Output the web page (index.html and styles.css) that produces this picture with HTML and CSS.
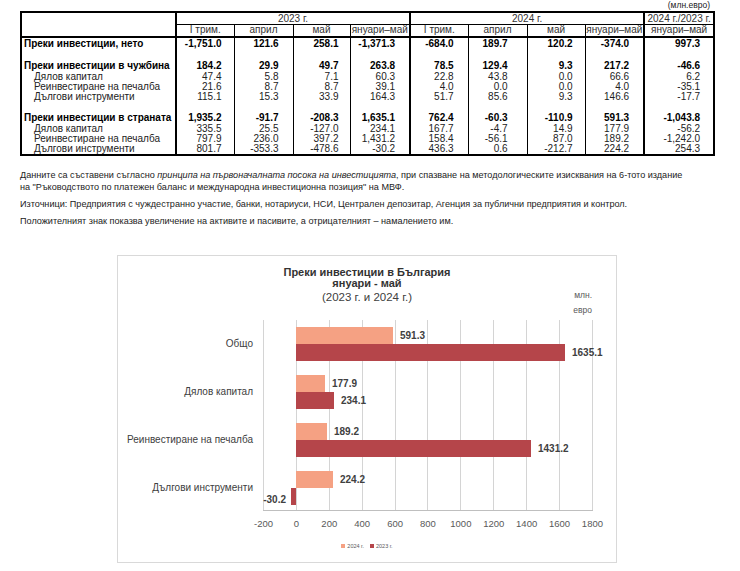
FILE: index.html
```html
<!DOCTYPE html>
<html lang="bg">
<head>
<meta charset="utf-8">
<title>Преки инвестиции</title>
<link rel="stylesheet" href="styles.css">
</head>
<body>
<div class="page">
  <div class="unit">(млн.евро)</div>
  <table class="data">
    <colgroup>
      <col class="w-label"><col class="w58"><col class="w59"><col class="w57"><col class="w60">
      <col class="w58"><col class="w59"><col class="w58"><col class="w59"><col class="w70">
    </colgroup>
    <thead>
      <tr class="h1">
        <th rowspan="2" class="lbl"></th>
        <th colspan="4" class="grp">2023 г.</th>
        <th colspan="4" class="grp">2024 г.</th>
        <th class="grp cmp">2024 г./2023 г.</th>
      </tr>
      <tr class="h2">
        <th class="grp">I трим.</th><th>април</th><th>май</th><th>януари–май</th>
        <th class="grp">I трим.</th><th>април</th><th>май</th><th>януари–май</th>
        <th class="grp">януари–май</th>
      </tr>
    </thead>
    <tbody>
      <tr class="main first">
        <td>Преки инвестиции, нето</td><td>-1,751.0</td><td>121.6</td><td>258.1</td><td>-1,371.3</td><td>-684.0</td><td>189.7</td><td>120.2</td><td>-374.0</td><td>997.3</td>
      </tr>
      <tr class="gap"><td></td><td></td><td></td><td></td><td></td><td></td><td></td><td></td><td></td><td></td></tr>
      <tr class="main">
        <td>Преки инвестиции в чужбина</td><td>184.2</td><td>29.9</td><td>49.7</td><td>263.8</td><td>78.5</td><td>129.4</td><td>9.3</td><td>217.2</td><td>-46.6</td>
      </tr>
      <tr class="sub">
        <td>Дялов капитал</td><td>47.4</td><td>5.8</td><td>7.1</td><td>60.3</td><td>22.8</td><td>43.8</td><td>0.0</td><td>66.6</td><td>6.2</td>
      </tr>
      <tr class="sub">
        <td>Реинвестиране на печалба</td><td>21.6</td><td>8.7</td><td>8.7</td><td>39.1</td><td>4.0</td><td>0.0</td><td>0.0</td><td>4.0</td><td>-35.1</td>
      </tr>
      <tr class="sub">
        <td>Дългови инструменти</td><td>115.1</td><td>15.3</td><td>33.9</td><td>164.3</td><td>51.7</td><td>85.6</td><td>9.3</td><td>146.6</td><td>-17.7</td>
      </tr>
      <tr class="gap"><td></td><td></td><td></td><td></td><td></td><td></td><td></td><td></td><td></td><td></td></tr>
      <tr class="main">
        <td>Преки инвестиции в страната</td><td>1,935.2</td><td>-91.7</td><td>-208.3</td><td>1,635.1</td><td>762.4</td><td>-60.3</td><td>-110.9</td><td>591.3</td><td>-1,043.8</td>
      </tr>
      <tr class="sub">
        <td>Дялов капитал</td><td>335.5</td><td>25.5</td><td>-127.0</td><td>234.1</td><td>167.7</td><td>-4.7</td><td>14.9</td><td>177.9</td><td>-56.2</td>
      </tr>
      <tr class="sub">
        <td>Реинвестиране на печалба</td><td>797.9</td><td>236.0</td><td>397.2</td><td>1,431.2</td><td>158.4</td><td>-56.1</td><td>87.0</td><td>189.2</td><td>-1,242.0</td>
      </tr>
      <tr class="sub last">
        <td>Дългови инструменти</td><td>801.7</td><td>-353.3</td><td>-478.6</td><td>-30.2</td><td>436.3</td><td>0.6</td><td>-212.7</td><td>224.2</td><td>254.3</td>
      </tr>
    </tbody>
  </table>

  <div class="notes">
    <p>Данните са съставени съгласно <i>принципа на първоначалната посока на инвестицията</i>, при спазване на методологическите изисквания на 6-тото издание<br>на "Ръководството по платежен баланс и международна инвестиционна позиция" на МВФ.</p>
    <p>Източници: Предприятия с чуждестранно участие, банки, нотариуси, НСИ, Централен депозитар, Агенция за публични предприятия и контрол.</p>
    <p>Положителният знак показва увеличение на активите и пасивите, а отрицателният – намалението им.</p>
  </div>

  <div class="chart">
    <div class="chart-head">
      <div class="title">
        <div class="t1">Преки инвестиции в България</div>
        <div class="t2">януари - май</div>
        <div class="t3">(2023 г. и 2024 г.)</div>
      </div>
      <div class="units">млн.<br>евро</div>
    </div>
    <div class="chart-body">
      <div class="cats">
        <div class="cat">Общо</div>
        <div class="cat">Дялов капитал</div>
        <div class="cat">Реинвестиране на печалба</div>
        <div class="cat">Дългови инструменти</div>
      </div>
      <div class="plot">
        <div class="grid"><i></i><i></i><i></i><i></i><i></i><i></i><i></i><i></i><i></i><i></i><i></i></div>
        <div class="band">
          <div class="row"><span class="neg"></span><span class="pos"><b class="bar y24" style="width:97px"></b><em>591.3</em></span></div>
          <div class="row"><span class="neg"></span><span class="pos"><b class="bar y23" style="width:269px"></b><em>1635.1</em></span></div>
        </div>
        <div class="band">
          <div class="row"><span class="neg"></span><span class="pos"><b class="bar y24" style="width:29px"></b><em>177.9</em></span></div>
          <div class="row"><span class="neg"></span><span class="pos"><b class="bar y23" style="width:38px"></b><em>234.1</em></span></div>
        </div>
        <div class="band">
          <div class="row"><span class="neg"></span><span class="pos"><b class="bar y24" style="width:31px"></b><em>189.2</em></span></div>
          <div class="row"><span class="neg"></span><span class="pos"><b class="bar y23" style="width:235px"></b><em>1431.2</em></span></div>
        </div>
        <div class="band">
          <div class="row"><span class="neg"></span><span class="pos"><b class="bar y24" style="width:37px"></b><em>224.2</em></span></div>
          <div class="row"><span class="neg"><em class="nl">-30.2</em><b class="bar y23" style="width:5px"></b></span><span class="pos"></span></div>
        </div>
      </div>
    </div>
    <div class="axis">
      <span>-200</span><span>0</span><span>200</span><span>400</span><span>600</span><span>800</span><span>1000</span><span>1200</span><span>1400</span><span>1600</span><span>1800</span>
    </div>
    <div class="legend">
      <span class="key"><i class="sw y24"></i>2024 г.</span>
      <span class="key"><i class="sw y23"></i>2023 г.</span>
    </div>
  </div>
</div>
</body>
</html>
```

FILE: styles.css
```css
* { box-sizing: border-box; }

body {
  margin: 0;
  background: #fff;
  color: #000;
  font-family: "Liberation Sans", Arial, sans-serif;
}

.page {
  padding: 0 0 0 20px;
  width: 740px;
}

.unit {
  width: 693px;
  padding-right: 3px;
  text-align: right;
  font-size: 8.5px;
  line-height: 11px;
  color: #222;
}

/* ---------- table ---------- */
table.data {
  border-collapse: collapse;
  table-layout: fixed;
  width: 693px;
  border: 2px solid #000;
  font-size: 10px;
}

.w-label { width: 155px; }
.w57 { width: 57px; }
.w58 { width: 58px; }
.w59 { width: 59px; }
.w60 { width: 60px; }
.w70 { width: 70px; }

table.data th,
table.data td {
  padding: 0;
  line-height: 10px;
  white-space: nowrap;
  overflow: hidden;
  border-left: 1px solid #000;
}

table.data th {
  font-weight: normal;
  color: #333;
  text-align: center;
}

table.data th.lbl { border-left: 2px solid #000; border-bottom: 2px solid #000; }
table.data th.grp { border-left: 2px solid #000; }

.h1 th { height: 12px; border-bottom: 1px solid #000; }
.h1 th.cmp { vertical-align: bottom; line-height: 11px; }
.h2 th { height: 12px; border-bottom: 2px solid #000; }

table.data td { text-align: right; height: 10px; }
table.data td:first-child { text-align: left; padding-left: 2px; border-left: 2px solid #000; }
table.data td:nth-child(2),
table.data td:nth-child(6),
table.data td:nth-child(10) { border-left: 2px solid #000; }

table.data td:nth-child(2) { padding-right: 12px; }
table.data td:nth-child(3) { padding-right: 14px; }
table.data td:nth-child(4) { padding-right: 11px; }
table.data td:nth-child(5) { padding-right: 14px; }
table.data td:nth-child(6) { padding-right: 14px; }
table.data td:nth-child(7) { padding-right: 19px; }
table.data td:nth-child(8) { padding-right: 12px; }
table.data td:nth-child(9) { padding-right: 14px; }
table.data td:nth-child(10) { padding-right: 13px; }

tr.main td { font-weight: bold; height: 11px; }
tr.first td { height: 13px; }
tr.sub td { color: #222; }
tr.sub td:first-child { padding-left: 12px; }
tr.gap td { height: 11px; }
tr.last td { height: 10px; }

/* ---------- notes ---------- */
.notes {
  margin-top: 13px;
  font-size: 9.1px;
  line-height: 12px;
  color: #222;
}

.notes p { margin: 0 0 5px; }

/* ---------- chart ---------- */
.chart {
  margin: 28px 0 0 97px;
  width: 500px;
  height: 308px;
  border: 1px solid #d9d9d9;
  padding-top: 11px;
  color: #404040;
}

.chart-head {
  display: grid;
  grid-template-columns: 1fr auto 1fr;
  align-items: start;
}

.title {
  grid-column: 2;
  text-align: center;
}

.t1, .t2 {
  font-weight: bold;
  font-size: 11px;
  line-height: 11px;
  color: #333;
}

.t3 {
  font-size: 11.5px;
  line-height: 16px;
}

.units {
  grid-column: 3;
  justify-self: end;
  margin: 21px 24px 0 0;
  font-size: 8.5px;
  line-height: 15px;
  text-align: right;
  color: #595959;
}

.chart-body {
  display: flex;
  gap: 10px;
  margin-top: 2px;
}

.cats {
  width: 135px;
  padding: 7px 0 5px;
  display: flex;
  flex-direction: column;
  gap: 14px;
}

.cat {
  height: 34px;
  display: flex;
  align-items: center;
  justify-content: flex-end;
  font-size: 10px;
  white-space: nowrap;
}

.plot {
  position: relative;
  width: 330px;
  padding: 7px 0 5px;
  display: flex;
  flex-direction: column;
  gap: 14px;
  border-bottom: 1px solid #bfbfbf;
}

.grid {
  position: absolute;
  inset: 0;
  display: flex;
  justify-content: space-between;
}

.grid i {
  width: 1px;
  background: #d4d4d4;
}

.band {
  position: relative;
  display: flex;
  flex-direction: column;
}

.row {
  height: 17px;
  display: flex;
  align-items: center;
}

.neg {
  width: 33px;
  flex: none;
  display: flex;
  justify-content: flex-end;
  align-items: center;
  height: 100%;
}

.pos {
  display: flex;
  align-items: center;
  height: 100%;
}

.bar {
  display: block;
  height: 100%;
}

.y24 { background: #f5a183; }
.y23 { background: #b5454a; }

.row em {
  font-style: normal;
  font-weight: bold;
  font-size: 10px;
  margin-left: 7px;
  color: #404040;
}

.row em.nl {
  margin: 6px 5px 0 0;
}

.axis {
  margin: 7px 0 0 145px;
  width: 330px;
  display: flex;
  justify-content: space-between;
  font-size: 9.5px;
  line-height: 12px;
  color: #595959;
}

.axis span {
  width: 1px;
  display: flex;
  justify-content: center;
  white-space: nowrap;
}

.legend {
  margin-top: 12px;
  display: flex;
  justify-content: center;
  gap: 6px;
  font-size: 5.5px;
  line-height: 8px;
  color: #595959;
}

.key {
  display: flex;
  align-items: center;
  gap: 2px;
}

.sw {
  display: block;
  width: 4px;
  height: 4px;
}
```
